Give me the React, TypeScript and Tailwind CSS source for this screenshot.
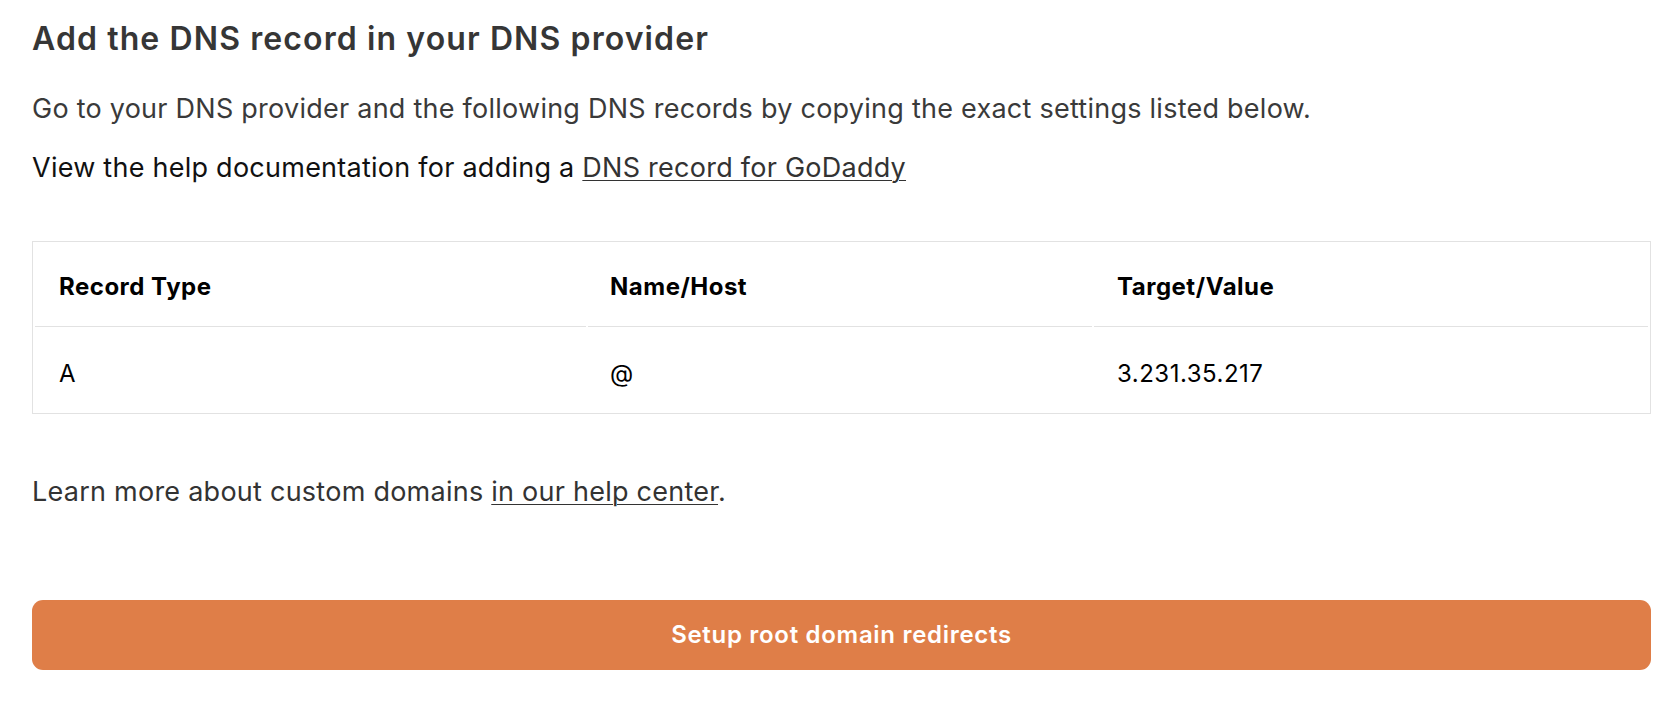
import React from "react";

const records = [{ type: "A", host: "@", value: "3.231.35.217" }];

export default function App() {
  return (
    <div className="min-h-screen bg-white font-['Inter','Liberation_Sans',sans-serif] pl-8 pr-[25px] pt-[19px]">
      <h2 className="text-[32px] leading-[40px] font-semibold text-[#363636] tracking-[1.1px]">
        Add the DNS record in your DNS provider
      </h2>

      <p className="mt-[32px] text-[27px] leading-[36px] tracking-[0.25px] text-[#3a3a3a]">
        Go to your DNS provider and the following DNS records by copying the exact settings listed below.
      </p>
      <p className="mt-[23px] text-[27px] leading-[36px] tracking-[0.25px] text-[#111]">
        View the help documentation for adding a{" "}
        <a href="#" className="underline underline-offset-[3px] decoration-1 text-[#333]">
          DNS record for GoDaddy
        </a>
      </p>

      <table className="mt-[55px] w-full border-separate border-spacing-[2px] border border-[#e2e2e2] text-[24px] leading-[32px] text-black">
        <thead>
          <tr>
            <th className="w-[551px] pt-[27px] pb-[23px] border-b border-[#e2e2e2] pl-6 text-left font-bold tracking-[0.5px]">Record Type</th>
            <th className="w-[504px] pt-[27px] pb-[23px] border-b border-[#e2e2e2] pl-[22px] text-left font-bold tracking-[0.5px]">Name/Host</th>
            <th className="pt-[27px] pb-[23px] border-b border-[#e2e2e2] pl-[23px] text-left font-bold tracking-[0.5px]">Target/Value</th>
          </tr>
        </thead>
        <tbody>
          {records.map((r) => (
            <tr key={r.value}>
              <td className="pt-[29px] pb-[21px] pl-6 tracking-[0.5px]">{r.type}</td>
              <td className="pt-[29px] pb-[21px] pl-[22px] tracking-[0.5px]">{r.host}</td>
              <td className="pt-[29px] pb-[21px] pl-[23px] tracking-[0.5px]">{r.value}</td>
            </tr>
          ))}
        </tbody>
      </table>

      <p className="mt-[60px] text-[27px] leading-[36px] tracking-[0.25px] text-[#333]">
        Learn more about custom domains{" "}
        <a href="#" className="underline underline-offset-[3px] decoration-1">
          in our help center
        </a>
        .
      </p>

      <button className="mt-[90px] w-full h-[70px] rounded-[11px] bg-[#df7e48] text-white text-[24px] font-semibold tracking-[0.7px]">
        Setup root domain redirects
      </button>
    </div>
  );
}
